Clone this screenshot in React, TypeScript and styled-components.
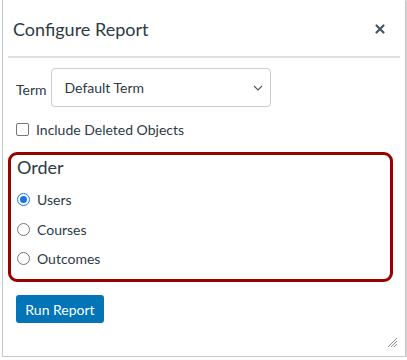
import styled, { createGlobalStyle } from "styled-components";

const Global = createGlobalStyle`
  html, body {
    margin: 0;
    padding: 0;
    background: #ffffff;
    font-family: Lato, "Liberation Sans", sans-serif;
    color: #2d3b45;
  }
`;

const Dialog = styled.div`
  position: relative;
  box-sizing: border-box;
  margin: -1px 0 0 2px;
  width: 404px;
  height: 358px;
  background: #fff;
  border: 1px solid #c4c9cc;
  box-shadow: 1px 1px 2px rgba(0, 0, 0, 0.25);
`;

const Header = styled.div`
  display: flex;
  align-items: center;
  justify-content: space-between;
  height: 58px;
  margin: 0 5px;
  padding: 0 14px 0 5px;
  border-bottom: 2px solid #dde1e3;
  box-sizing: border-box;
`;

const Title = styled.h1`
  margin: 0;
  padding-top: 1px;
  font-size: 18px;
  font-weight: 400;
`;

const Close = styled.button`
  border: none;
  background: none;
  padding: 0;
  width: 12px;
  height: 12px;
  display: flex;
  margin-top: 1px;
`;

const Body = styled.div`
  padding: 10px 13px 0 13px;
`;

const TermRow = styled.div`
  display: flex;
  align-items: flex-end;
  gap: 4px;
`;

const Label = styled.span`
  font-size: 14px;
  padding-bottom: 9px;
`;

const Select = styled.div`
  box-sizing: border-box;
  width: 220px;
  height: 39px;
  border: 1px solid #c7cdd1;
  border-radius: 4px;
  display: flex;
  align-items: center;
  justify-content: space-between;
  padding: 0 6px 0 13px;
  font-size: 14px;
`;

const CheckRow = styled.label`
  display: flex;
  align-items: center;
  gap: 7px;
  margin-top: 14px;
  font-size: 14px;
`;

const CheckBox = styled.span`
  box-sizing: border-box;
  width: 13px;
  height: 13px;
  border: 1px solid #767676;
  border-radius: 2px;
`;

const Highlight = styled.div`
  margin: 14px 0 0 -8px;
  width: 385px;
  height: 130px;
  box-sizing: border-box;
  border: 3px solid #990000;
  border-radius: 9px;
  padding: 1px 0 0 6px;
`;

const Legend = styled.div`
  font-size: 18px;
  line-height: 22px;
  margin-bottom: 7px;
`;

const RadioRow = styled.label`
  display: flex;
  align-items: center;
  gap: 7px;
  height: 29.5px;
  font-size: 14px;
`;

const Radio = styled.span<{ $checked?: boolean }>`
  box-sizing: border-box;
  width: 13px;
  height: 13px;
  border-radius: 50%;
  border: 1px solid ${(p) => (p.$checked ? "#1a73e8" : "#767676")};
  display: flex;
  align-items: center;
  justify-content: center;
  &::after {
    content: "";
    display: ${(p) => (p.$checked ? "block" : "none")};
    width: 7px;
    height: 7px;
    border-radius: 50%;
    background: #1a73e8;
  }
`;

const RunButton = styled.button`
  margin-top: 13px;
  width: 88px;
  height: 28px;
  border: none;
  border-radius: 3px;
  background: #0374b5;
  color: #fff;
  font-family: inherit;
  font-size: 14px;
  padding: 0;
`;

const Grip = styled.svg`
  position: absolute;
  right: 7px;
  bottom: 8px;
`;

export default function App() {
  return (
    <>
      <Global />
      <Dialog>
        <Header>
          <Title>Configure Report</Title>
          <Close aria-label="Close">
            <svg width="12" height="12" viewBox="0 0 12 12">
              <path d="M2.5 2.5L9.5 9.5M9.5 2.5L2.5 9.5" stroke="#4a545b" strokeWidth="2.2" strokeLinecap="round" />
            </svg>
          </Close>
        </Header>
        <Body>
          <TermRow>
            <Label>Term</Label>
            <Select>
              <span>Default Term</span>
              <svg width="12" height="8" viewBox="0 0 12 8">
                <path d="M2 2L6 6L10 2" fill="none" stroke="#555" strokeWidth="1.1" />
              </svg>
            </Select>
          </TermRow>
          <CheckRow>
            <CheckBox />
            Include Deleted Objects
          </CheckRow>
          <Highlight>
            <Legend>Order</Legend>
            <RadioRow>
              <Radio $checked />
              Users
            </RadioRow>
            <RadioRow>
              <Radio />
              Courses
            </RadioRow>
            <RadioRow>
              <Radio />
              Outcomes
            </RadioRow>
          </Highlight>
          <RunButton>Run Report</RunButton>
        </Body>
        <Grip width="11" height="11" viewBox="0 0 11 11">
          <path d="M1 10L10 1M4 10L10 4M7 10L10 7" stroke="#8a8f93" strokeWidth="1" />
        </Grip>
      </Dialog>
    </>
  );
}
